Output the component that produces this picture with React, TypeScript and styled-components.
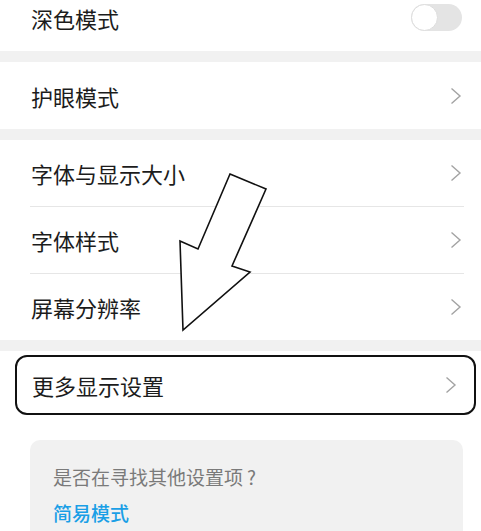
import React from 'react';
import styled, { createGlobalStyle } from 'styled-components';

const GlobalStyle = createGlobalStyle`
    html, body {
        margin: 0;
        padding: 0;
        background: #ffffff;
        overflow: hidden;
    }

    body {
        font-family: "Noto Sans CJK SC", "Noto Sans", sans-serif;
    }
`;

const Page = styled.div`
    position: relative;
    width: 481px;
    height: 531px;
    overflow: hidden;
    background: #ffffff;
`;

const Scroll = styled.div`
    margin-top: -16px;
`;

const Section = styled.div`
    background: #ffffff;
`;

const Gap = styled.div`
    height: 11px;
    background: #f1f1f1;
`;

const Row = styled.div<{ $height?: number }>`
    display: flex;
    align-items: center;
    justify-content: space-between;
    height: ${props => props.$height ? props.$height : 66}px;
    padding: 0 19px 0 31px;
    font-size: 22px;
    line-height: 1;
    color: #1c1c1c;
`;

const Divider = styled.div`
    height: 1px;
    margin: 0 17px 0 30px;
    background: #e6e6e6;
`;

const Toggle = styled.div`
    position: relative;
    width: 51px;
    height: 27px;
    border-radius: 14px;
    background: #e4e4e4;

    &::after {
        content: '';
        position: absolute;
        left: 0;
        top: 0;
        width: 25px;
        height: 25px;
        border-radius: 50%;
        background: #ffffff;
        border: 1px solid #dddddd;
    }
`;

const HighlightWrap = styled.div`
    padding: 4px 5px 0 15px;
`;

const Highlight = styled.div`
    display: flex;
    align-items: center;
    justify-content: space-between;
    height: 56px;
    padding: 0 17px 0 15px;
    border: 2px solid #111111;
    border-radius: 12px;
    font-size: 22px;
    line-height: 1;
    color: #1c1c1c;
`;

const Card = styled.div`
    margin: 25px 18px 0 30px;
    padding: 25px 22px 20px 23px;
    height: 120px;
    border-radius: 10px;
    background: #f1f1f1;
`;

const Hint = styled.p`
    margin: 0;
    font-size: 19px;
    line-height: 24px;
    color: #7a7a7a;

    span {
        margin-left: 4px;
    }
`;

const Link = styled.p`
    margin: 12px 0 0;
    font-size: 19px;
    line-height: 24px;
    color: #1a9fe6;
    font-weight: 500;
`;

const ArrowLayer = styled.svg`
    position: absolute;
    left: 0;
    top: 0;
    pointer-events: none;
`;

const Chevron = () => (
    <svg width="12" height="18" viewBox="0 0 12 18">
        <path d="M1.5 1.5 L10 9 L1.5 16.5" fill="none" stroke="#a3a3a3" strokeWidth="1.4"/>
    </svg>
);

const App = () => {
    const fontRows = ['字体与显示大小', '字体样式', '屏幕分辨率'];

    return (
        <Page>
            <GlobalStyle/>
            <Scroll>
                <Section>
                    <Row $height={67}>
                        <span>深色模式</span>
                        <Toggle/>
                    </Row>
                </Section>
                <Gap/>
                <Section>
                    <Row $height={67}>
                        <span>护眼模式</span>
                        <Chevron/>
                    </Row>
                </Section>
                <Gap/>
                <Section>
                    {fontRows.map((label, index) => (
                        <React.Fragment key={label}>
                            {index > 0 && <Divider/>}
                            <Row>
                                <span>{label}</span>
                                <Chevron/>
                            </Row>
                        </React.Fragment>
                    ))}
                </Section>
                <Gap/>
                <HighlightWrap>
                    <Highlight>
                        <span>更多显示设置</span>
                        <Chevron/>
                    </Highlight>
                </HighlightWrap>
                <Card>
                    <Hint>是否在寻找其他设置项<span>?</span></Hint>
                    <Link>简易模式</Link>
                </Card>
            </Scroll>
            <ArrowLayer width="481" height="531" viewBox="0 0 481 531">
                <polygon
                    points="230,174 266,189 232,266 250,272 183,330 180,241 198,249"
                    fill="#ffffff"
                    stroke="#111111"
                    strokeWidth="1.6"
                    strokeLinejoin="miter"
                />
            </ArrowLayer>
        </Page>
    );
};

export default App;
